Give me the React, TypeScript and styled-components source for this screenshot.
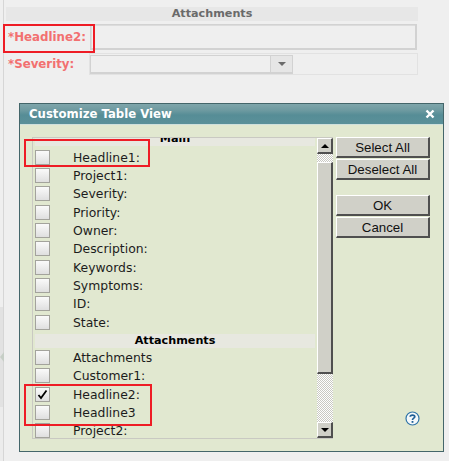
import React from "react";
import styled, { createGlobalStyle } from "styled-components";

const GlobalStyle = createGlobalStyle`
  html, body {
    margin: 0;
    padding: 0;
    background: #efefef;
  }
`;

const Page = styled.div`
  position: relative;
  width: 449px;
  height: 461px;
  overflow: hidden;
  background: #efefef;
  font-family: "DejaVu Sans", Verdana, sans-serif;
  padding: 7px 31px 0 6px;
  box-sizing: border-box;
`;

const SideBand = styled.div`
  position: absolute;
  left: 0;
  top: 0;
  bottom: 0;
  width: 4px;
  box-sizing: border-box;
  border-right: 1px solid #d6d6d6;
  background: linear-gradient(#efefef 0, #efefef 307px, #e2e2e2 307px, #e2e2e2 407px, #ececec 407px);
`;

const SideArrow = styled.div`
  position: absolute;
  left: 0;
  top: 352px;
  width: 0;
  height: 0;
  border-top: 5px solid transparent;
  border-bottom: 5px solid transparent;
  border-right: 4px solid #c6cec6;
`;

const SectionBar = styled.div`
  height: 14px;
  line-height: 14px;
  background: #e7e7e7;
  color: #6a6a6a;
  font-size: 11.2px;
  font-weight: bold;
  text-align: center;
`;

const FormRow = styled.div<{ $height: number; $top: number }>`
  display: flex;
  align-items: center;
  height: ${(p) => p.$height}px;
  margin-top: ${(p) => p.$top}px;
`;

const FieldLabel = styled.div`
  width: 83px;
  box-sizing: border-box;
  padding-left: 2px;
  flex: none;
  color: #f27070;
  font-size: 11.8px;
  font-weight: bold;
  white-space: nowrap;
`;

const TextField = styled.div`
  flex: 1;
  height: 100%;
  box-sizing: border-box;
  margin-left: 1px;
  margin-right: 1px;
  background: #efefef;
  border: 1px solid #d2d2d2;
  border-width: 1px 2px 2px 1px;
  box-shadow: inset 1px 1px 0 #dcdcdc;
`;

const SelectCell = styled.div`
  flex: 1;
  height: 100%;
  box-sizing: border-box;
  border: 1px solid #e2e2e2;
  padding: 1px 0 0 0;
`;

const SelectBox = styled.div`
  display: flex;
  width: 203px;
  height: 19px;
  box-sizing: border-box;
  border: 1px solid #d2d2d2;
  border-width: 1px 1px 2px 1px;
`;

const SelectValue = styled.div`
  flex: 1;
`;

const SelectButton = styled.div`
  width: 21px;
  display: flex;
  align-items: center;
  justify-content: center;
  background: #e6e6e6;
  border-left: 1px solid #d2d2d2;

  &::after {
    content: "";
    border-left: 4px solid transparent;
    border-right: 4px solid transparent;
    border-top: 4px solid #6b6b6b;
  }
`;

const Dialog = styled.div`
  position: absolute;
  left: 19px;
  top: 103px;
  width: 425px;
  height: 349px;
  box-sizing: border-box;
  border: 1px solid #44666a;
  background: #e1e8d0;
  display: flex;
  flex-direction: column;
`;

const TitleBar = styled.div`
  height: 20px;
  flex: none;
  display: flex;
  align-items: center;
  justify-content: space-between;
  padding: 0 8px 0 9px;
  background: linear-gradient(#7fa6ab 0, #6f9ba1 30%, #568d96 55%, #5a9099 100%);
  border-bottom: 1px solid #cfe0dc;
  color: #ffffff;
  font-size: 11.7px;
  font-weight: bold;
`;

const DialogBody = styled.div`
  flex: 1;
  display: flex;
  padding: 12px 13px 0 12px;
  gap: 3px;
`;

const ListPanel = styled.div`
  width: 301px;
  height: 302px;
  box-sizing: border-box;
  flex: none;
  display: flex;
  border: 1px solid #c9c9c2;
  border-width: 1px 0 1px 1px;
`;

const ListRows = styled.div`
  flex: 1;
  overflow: hidden;
  padding-left: 2px;
  padding-right: 2px;
`;

const GroupHeader = styled.div<{ $clipped?: boolean }>`
  height: 14px;
  line-height: 14px;
  margin-top: ${(p) => (p.$clipped ? -6 : 3)}px;
  margin-bottom: ${(p) => (p.$clipped ? 2 : 0)}px;
  background: #e7e8e0;
  color: #000000;
  font-size: 11.2px;
  font-weight: bold;
  text-align: center;
`;

const OptionRow = styled.div`
  display: flex;
  align-items: center;
  height: 18.35px;
  color: #1c1c1c;
  font-size: 12.4px;
`;

const CheckBox = styled.span`
  width: 15px;
  height: 15px;
  box-sizing: border-box;
  flex: none;
  display: flex;
  align-items: center;
  justify-content: center;
  border: 1px solid #a3a39c;
  background: linear-gradient(#fafafa, #dfdfdf);
  margin-right: 23px;
`;

const Scrollbar = styled.div`
  width: 16px;
  flex: none;
  display: flex;
  flex-direction: column;
  background: repeating-conic-gradient(#c9c9c2 0 25%, #ffffff 0 50%) 0 0 / 2px 2px;
`;

const Raised = styled.div`
  box-sizing: border-box;
  background: #d0d0c8;
  border: 1px solid;
  border-color: #ffffff #4f4f4f #4f4f4f #ffffff;
  border-width: 1px 2px 2px 1px;
`;

const ScrollButton = styled(Raised)<{ $down?: boolean }>`
  height: 16px;
  flex: none;
  display: flex;
  align-items: center;
  justify-content: center;

  &::after {
    content: "";
    border-left: 4px solid transparent;
    border-right: 4px solid transparent;
    ${(p) =>
      p.$down ? "border-top: 4px solid #000;" : "border-bottom: 4px solid #000;"}
  }
`;

const ScrollThumb = styled(Raised)`
  height: 212px;
  margin-top: 8px;
  flex: none;
`;

const ScrollRest = styled.div`
  flex: 1;
`;

const ActionColumn = styled.div`
  width: 94px;
  flex: none;
  display: flex;
  flex-direction: column;
`;

const ActionButton = styled(Raised)<{ $gap?: number }>`
  height: 21px;
  margin-top: ${(p) => p.$gap ?? 1}px;
  display: flex;
  align-items: center;
  justify-content: center;
  color: #111111;
  font-family: "Liberation Sans", Arial, sans-serif;
  font-size: 13.3px;
`;

const HelpIcon = styled.svg`
  display: block;
  margin: 173px 0 0 69px;
`;

const Highlight = styled.div<{ $x: number; $y: number; $w: number; $h: number }>`
  position: absolute;
  left: ${(p) => p.$x}px;
  top: ${(p) => p.$y}px;
  width: ${(p) => p.$w}px;
  height: ${(p) => p.$h}px;
  box-sizing: border-box;
  border: 2px solid #ee1c25;
`;

const mainOptions = [
  "Headline1:",
  "Project1:",
  "Severity:",
  "Priority:",
  "Owner:",
  "Description:",
  "Keywords:",
  "Symptoms:",
  "ID:",
  "State:",
];

const attachmentOptions = ["Attachments", "Customer1:", "Headline2:", "Headline3", "Project2:"];

const Option = ({ label, checked }: { label: string; checked?: boolean }) => (
  <OptionRow>
    <CheckBox>
      {checked && (
        <svg width="11" height="11" viewBox="0 0 11 11">
          <path d="M1.5 6 L4 9 L9.5 1.5" fill="none" stroke="#000" strokeWidth="1.8" />
        </svg>
      )}
    </CheckBox>
    {label}
  </OptionRow>
);

export default function App() {
  return (
    <Page>
      <GlobalStyle />
      <SideBand />
      <SideArrow />
      <SectionBar>Attachments</SectionBar>
      <FormRow $height={26} $top={3}>
        <FieldLabel>*Headline2:</FieldLabel>
        <TextField />
      </FormRow>
      <FormRow $height={22} $top={3}>
        <FieldLabel>*Severity:</FieldLabel>
        <SelectCell>
          <SelectBox>
            <SelectValue />
            <SelectButton />
          </SelectBox>
        </SelectCell>
      </FormRow>
      <Dialog>
        <TitleBar>
          Customize Table View
          <svg width="10" height="10" viewBox="0 0 10 10">
            <path d="M1.5 1.5 L8.5 8.5 M8.5 1.5 L1.5 8.5" stroke="#fff" strokeWidth="2.4" />
          </svg>
        </TitleBar>
        <DialogBody>
          <ListPanel>
            <ListRows>
              <GroupHeader $clipped>Main</GroupHeader>
              {mainOptions.map((label) => (
                <Option key={label} label={label} />
              ))}
              <GroupHeader>Attachments</GroupHeader>
              {attachmentOptions.map((label) => (
                <Option key={label} label={label} checked={label === "Headline2:"} />
              ))}
            </ListRows>
            <Scrollbar>
              <ScrollButton />
              <ScrollThumb />
              <ScrollRest />
              <ScrollButton $down />
            </Scrollbar>
          </ListPanel>
          <ActionColumn>
            <ActionButton $gap={0}>Select All</ActionButton>
            <ActionButton>Deselect All</ActionButton>
            <ActionButton $gap={15}>OK</ActionButton>
            <ActionButton>Cancel</ActionButton>
            <HelpIcon width="15" height="15" viewBox="0 0 15 15">
              <circle cx="7.5" cy="7.5" r="6.5" fill="#f4f8fa" stroke="#2f74a8" strokeWidth="1.2" />
              <path
                d="M5.2 5.8 C5.2 3.6 9.8 3.6 9.8 5.8 C9.8 7.2 7.5 7.2 7.5 9"
                fill="none"
                stroke="#1f5f96"
                strokeWidth="1.7"
              />
              <rect x="6.6" y="10" width="1.8" height="1.8" fill="#1f5f96" />
            </HelpIcon>
          </ActionColumn>
        </DialogBody>
      </Dialog>
      <Highlight $x={3} $y={24} $w={92} $h={29} />
      <Highlight $x={24} $y={139} $w={126} $h={28} />
      <Highlight $x={24} $y={384} $w={128} $h={42} />
    </Page>
  );
}
